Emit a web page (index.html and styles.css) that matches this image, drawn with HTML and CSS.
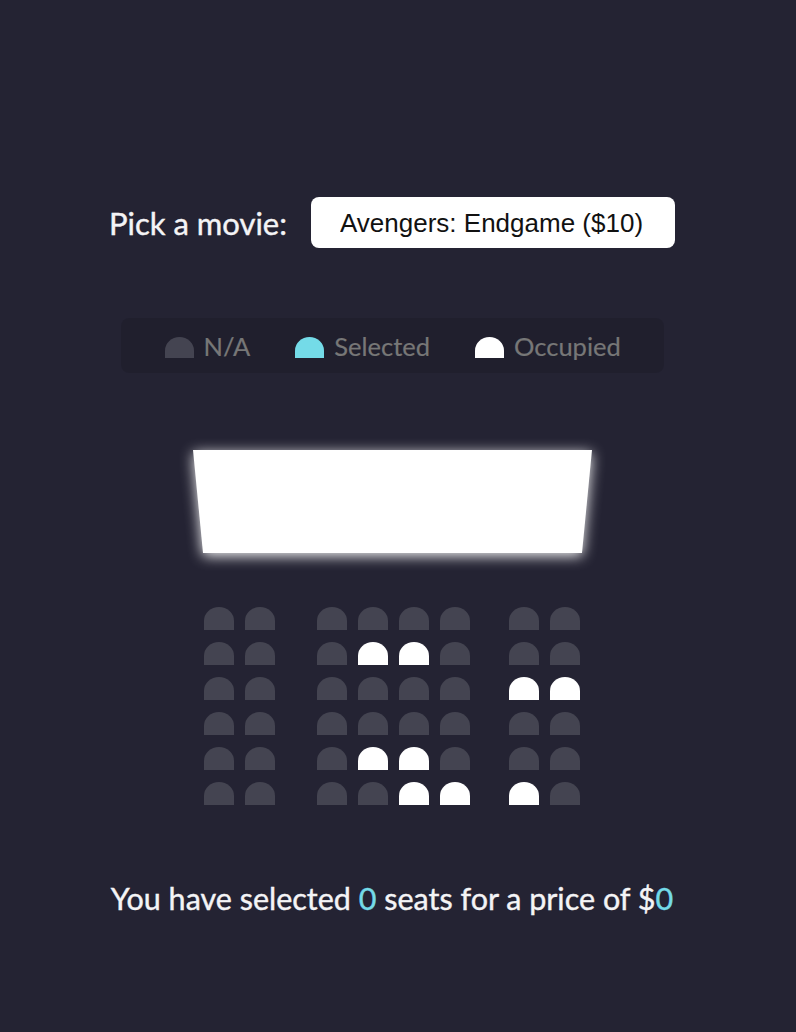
FILE: index.html
```html
<!DOCTYPE html>
<html lang="en">
<head>
<meta charset="UTF-8">
<title>Movie Seat Booking</title>
<link rel="stylesheet" href="styles.css">
</head>
<body>
  <main class="page">
    <div class="movie-container">
      <label class="movie-label" for="movie">Pick a movie:</label>
      <select id="movie" class="movie-select">
        <option value="10">Avengers: Endgame ($10)</option>
        <option value="12">Joker ($12)</option>
        <option value="8">Toy Story 4 ($8)</option>
        <option value="9">The Lion King ($9)</option>
      </select>
    </div>

    <ul class="showcase">
      <li class="legend-item"><span class="seat legend-seat"></span><small>N/A</small></li>
      <li class="legend-item"><span class="seat legend-seat selected"></span><small>Selected</small></li>
      <li class="legend-item"><span class="seat legend-seat occupied"></span><small>Occupied</small></li>
    </ul>

    <div class="screen-wrap">
      <svg class="screen" width="440" height="143" viewBox="0 0 440 143" aria-hidden="true">
        <defs>
          <filter id="glow" x="-20%" y="-40%" width="140%" height="180%">
            <feGaussianBlur stdDeviation="7"/>
          </filter>
        </defs>
        <polygon points="21,23 420,23 410,126 31,126" fill="#ffffff" opacity="0.95" filter="url(#glow)"/>
        <polygon points="21,20 420,20 410,123 31,123" fill="#ffffff"/>
      </svg>
    </div>

    <div class="seats">
      <div class="row">
        <span class="seat"></span><span class="seat gap-a"></span>
        <span class="seat"></span><span class="seat"></span><span class="seat"></span><span class="seat gap-b"></span>
        <span class="seat"></span><span class="seat"></span>
      </div>
      <div class="row">
        <span class="seat"></span><span class="seat gap-a"></span>
        <span class="seat"></span><span class="seat occupied"></span><span class="seat occupied"></span><span class="seat gap-b"></span>
        <span class="seat"></span><span class="seat"></span>
      </div>
      <div class="row">
        <span class="seat"></span><span class="seat gap-a"></span>
        <span class="seat"></span><span class="seat"></span><span class="seat"></span><span class="seat gap-b"></span>
        <span class="seat occupied"></span><span class="seat occupied"></span>
      </div>
      <div class="row">
        <span class="seat"></span><span class="seat gap-a"></span>
        <span class="seat"></span><span class="seat"></span><span class="seat"></span><span class="seat gap-b"></span>
        <span class="seat"></span><span class="seat"></span>
      </div>
      <div class="row">
        <span class="seat"></span><span class="seat gap-a"></span>
        <span class="seat"></span><span class="seat occupied"></span><span class="seat occupied"></span><span class="seat gap-b"></span>
        <span class="seat"></span><span class="seat"></span>
      </div>
      <div class="row">
        <span class="seat"></span><span class="seat gap-a"></span>
        <span class="seat"></span><span class="seat"></span><span class="seat occupied"></span><span class="seat occupied gap-b"></span>
        <span class="seat occupied"></span><span class="seat"></span>
      </div>
    </div>

    <p class="text">You have selected <span class="count">0</span> seats for a price of $<span class="total">0</span></p>
  </main>
</body>
</html>
```

FILE: styles.css
```css
* {
  box-sizing: border-box;
}

html, body {
  margin: 0;
  padding: 0;
}

body {
  background-color: #242333;
  color: #ffffff;
  font-family: Lato, "Open Sans", sans-serif;
  min-height: 1032px;
  padding-right: 12px;
}

.page {
  display: flex;
  flex-direction: column;
  align-items: center;
  padding-top: 197px;
}

.movie-container {
  display: flex;
  align-items: center;
  gap: 25px;
  height: 51px;
}

.movie-label {
  font-size: 31px;
  line-height: 36px;
  color: #f4f4f6;
  -webkit-text-stroke: 0.4px #f4f4f6;
}

.movie-select {
  -webkit-appearance: none;
  appearance: none;
  background-color: #ffffff;
  border: 0;
  border-radius: 8px;
  width: 364px;
  height: 51px;
  padding: 0 0 0 29px;
  font-family: "Liberation Sans", Arial, sans-serif;
  font-size: 26px;
  color: #111111;
  outline: none;
  margin-left: -1px;
}

.showcase {
  list-style: none;
  margin: 70px 0 0;
  padding: 0 39px 0 44px;
  width: 543px;
  height: 55px;
  display: flex;
  align-items: center;
  gap: 45px;
  background-color: rgba(0, 0, 0, 0.1);
  border-radius: 8px;
  color: #777777;
}

.legend-item {
  display: flex;
  align-items: center;
  gap: 10px;
}

.legend-item small {
  font-size: 25.5px;
  line-height: 30px;
  margin-top: 1px;
  -webkit-text-stroke: 0.2px #777777;
}

.seat {
  display: block;
  width: 30px;
  height: 23px;
  background-color: #444451;
  border-radius: 15px 15px 0 0 / 14px 14px 0 0;
  flex: none;
}

.legend-seat {
  width: 29px;
  height: 21px;
  margin-top: 3px;
}

.seat.selected {
  background-color: #74dbe8;
}

.seat.occupied {
  background-color: #ffffff;
}

.screen-wrap {
  margin-top: 57px;
  display: flex;
  justify-content: center;
}

.screen {
  display: block;
}

.seats {
  margin-top: 34px;
  display: flex;
  flex-direction: column;
  gap: 12px;
}

.row {
  display: flex;
  gap: 11px;
}

.seat.gap-a {
  margin-right: 31px;
}

.seat.gap-b {
  margin-right: 28px;
}

.text {
  margin: 78px 0 0;
  font-size: 30.5px;
  line-height: 30px;
  color: #f4f4f6;
  -webkit-text-stroke: 0.4px #f4f4f6;
}

.count,
.total {
  color: #74dbe8;
  -webkit-text-stroke-color: #74dbe8;
}
```
